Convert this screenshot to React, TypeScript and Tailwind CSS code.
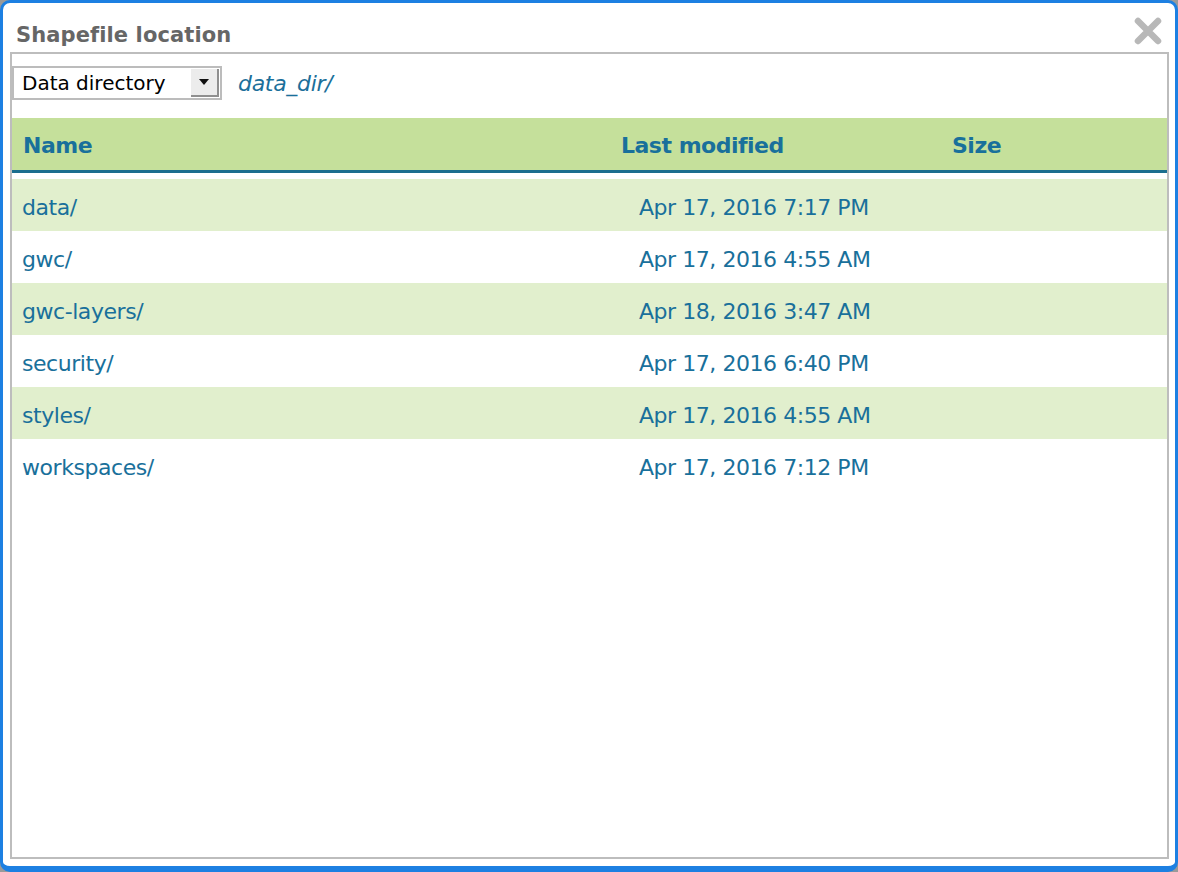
import React from 'react';

const rows = [
  { name: 'data/', modified: 'Apr 17, 2016 7:17 PM' },
  { name: 'gwc/', modified: 'Apr 17, 2016 4:55 AM' },
  { name: 'gwc-layers/', modified: 'Apr 18, 2016 3:47 AM' },
  { name: 'security/', modified: 'Apr 17, 2016 6:40 PM' },
  { name: 'styles/', modified: 'Apr 17, 2016 4:55 AM' },
  { name: 'workspaces/', modified: 'Apr 17, 2016 7:12 PM' },
];

const font = { fontFamily: '"DejaVu Sans", Verdana, sans-serif' };

export default function App() {
  return (
    <div className="w-[1178px] h-[872px] bg-[#9a9a9a] overflow-hidden" style={font}>
      <div className="w-full h-full flex flex-col bg-white border-t-[3px] border-l-[3px] border-r-[3px] border-b-[6px] border-[#1d80e2] rounded-[10px] pl-[7px] pr-[6px] pb-[7px]">
        {/* Title bar */}
        <div className="h-[49px] flex items-center justify-between pt-[16px]">
          <span className="text-[21px] font-bold text-[#666666] ml-[6px] tracking-[0.1px]">Shapefile location</span>
          <svg width="30" height="30" viewBox="0 0 30 30" className="mr-[6px] mb-[10px]">
            <path d="M5 5 L25 25 M25 5 L5 25" stroke="#b8b8b8" strokeWidth="6.5" strokeLinecap="round" />
          </svg>
        </div>

        {/* Panel */}
        <div className="flex-1 border-2 border-[#bdbdbd] flex flex-col">
          <div className="flex items-center mt-[12px] gap-[16px]">
            <div className="w-[210px] h-[34px] border-2 border-[#bcbcbc] flex items-center justify-between bg-white">
              <span className="text-[20px] text-black pl-[8px]">Data directory</span>
              <div className="w-[28px] h-[28px] mr-[1px] bg-[#ececec] border-r-2 border-b-2 border-[#8f8f8f] flex items-center justify-center">
                <svg width="12" height="8" viewBox="0 0 12 8">
                  <path d="M1 1 L11 1 L6 7 Z" fill="#111" />
                </svg>
              </div>
            </div>
            <span className="text-[22px] italic text-[#1b6f9a] tracking-[-0.3px]">data_dir/</span>
          </div>

          {/* Table */}
          <div className="mt-[18px]">
            <div className="h-[55px] pt-[3px] bg-[#c5e09b] border-b-[3px] border-[#1b6e8e] flex items-center text-[22px] font-bold text-[#19709b] tracking-[-0.5px]">
              <span className="w-[598px] pl-[11px]">Name</span>
              <span className="w-[331px] pl-[11px]">Last modified</span>
              <span className="pl-[11px]">Size</span>
            </div>
            <div className="mt-[6px]">
              {rows.map((r, i) => (
                <div
                  key={r.name}
                  className={`h-[52px] pt-[4px] flex items-center text-[22px] text-[#19709b] tracking-[-0.45px] ${i % 2 === 0 ? 'bg-[#e1efcd]' : 'bg-white'}`}
                >
                  <span className="w-[598px] pl-[10px]">{r.name}</span>
                  <span className="pl-[29px]">{r.modified}</span>
                </div>
              ))}
            </div>
          </div>
        </div>
      </div>
    </div>
  );
}
